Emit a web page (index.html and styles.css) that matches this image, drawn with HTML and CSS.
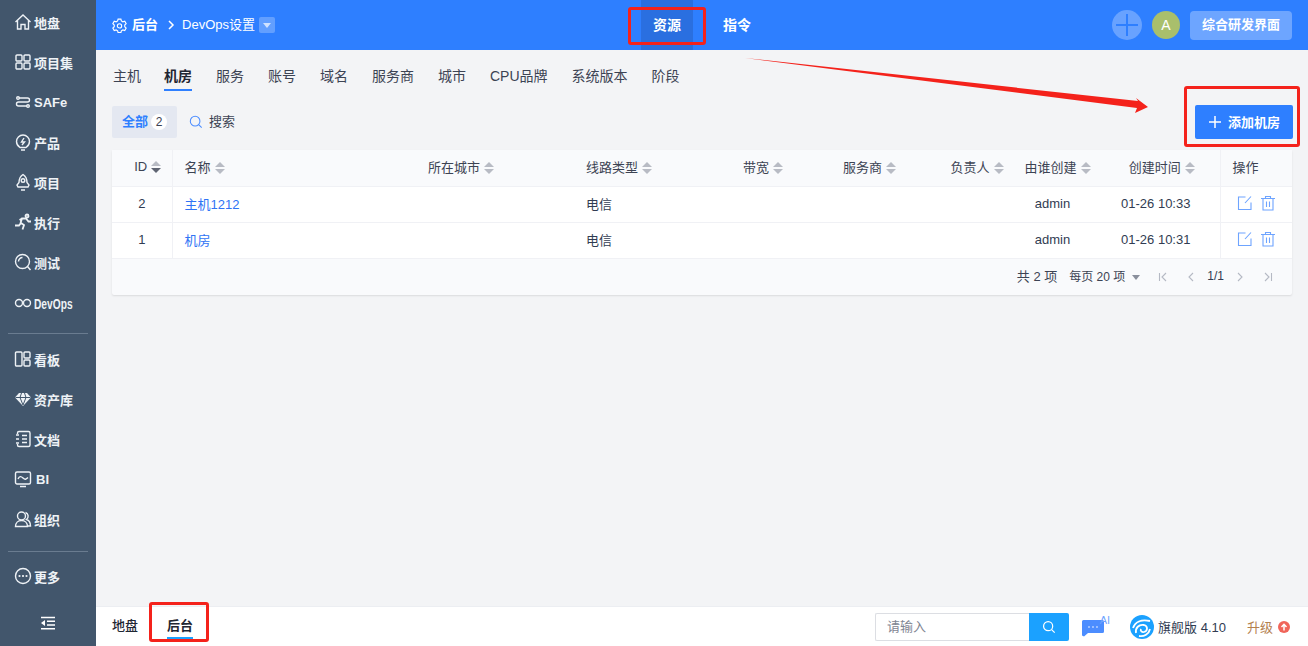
FILE: index.html
```html
<!DOCTYPE html>
<html lang="zh-CN">
<head>
    <meta charset="UTF-8">
    <title>机房 - DevOps设置</title>
    <link rel="stylesheet" href="styles.css">
</head>
<body>
    <div class="app">
        <aside class="sidebar">
            <nav class="menu menu-main">
                <a class="menu-item"><svg viewBox="0 0 18 18"><path d="M1.500 9 9 2l7.500 7M3.500 7.500V16H7v-4.500h4V16h3.500V7.500"/></svg>地盘</a>
                <a class="menu-item"><svg viewBox="0 0 18 18"><rect x="2" y="2" width="6" height="6" rx="1"/><rect x="10" y="2" width="6" height="6" rx="1"/><rect x="2" y="10" width="6" height="6" rx="1"/><rect x="10" y="10" width="6" height="6" rx="1"/></svg>项目集</a>
                <a class="menu-item"><svg viewBox="0 0 18 18"><path d="M5 5h8.500a2 2 0 0 1 0 4h-9a2 2 0 0 0 0 4H13"/><circle cx="4" cy="5" r="1.300"/><circle cx="14" cy="13" r="1.300"/></svg>SAFe</a>
                <a class="menu-item"><svg viewBox="0 0 18 18"><path d="M6 14.500C3.800 13 2.500 11 2.500 8.500a6.500 6.500 0 0 1 13 0c0 2.500-1.300 4.500-3.500 6zM7 17h4M10 5l-2.500 4h3L8 12"/></svg>产品</a>
                <a class="menu-item"><svg viewBox="0 0 18 18"><path d="M9 1.500c3 2 4 5 4 8l2 2.500-1 2H4l-1-2 2-2.500c0-3 1-6 4-8zM7 17h4"/><circle cx="9" cy="7.500" r="1.800"/></svg>项目</a>
                <a class="menu-item"><svg class="icon-run" viewBox="0 0 18 18"><path d="M1 12.500h4l2-2.500 3 2-1.500 4.500M6.500 10l1.500-4.500h4l2.500 3H17M8 5.500 5.500 7"/><circle cx="13" cy="3" r="1.500"/></svg>执行</a>
                <a class="menu-item"><svg viewBox="0 0 18 18"><circle cx="8.500" cy="8.500" r="7"/><path d="M13.500 13.500 16.500 17M4.500 8.500a4 4 0 0 1 4-4"/></svg>测试</a>
                <a class="menu-item menu-devops"><svg viewBox="0 0 18 18"><circle cx="5" cy="9" r="3.500"/><circle cx="13" cy="9" r="3.500"/></svg><span>DevOps</span></a>
            </nav>
            <nav class="menu menu-tools">
                <a class="menu-item"><svg viewBox="0 0 18 18"><rect x="1.500" y="2" width="6.500" height="14" rx="1"/><rect x="10" y="2" width="6" height="6" rx="1"/><rect x="10" y="10" width="6" height="6" rx="1"/></svg>看板</a>
                <a class="menu-item"><svg viewBox="0 0 18 18"><path class="fill" d="M5 3h8l4 4.500L9 16 1 7.500z"/><path class="cut" d="M1.500 7.500h15M6 7.500 9 15l3-7.500M6 7.500 7.500 3M12 7.500 10.500 3"/></svg>资产库</a>
                <a class="menu-item"><svg viewBox="0 0 18 18"><path d="M3.500 4V3a1.500 1.500 0 0 1 1.500-1.500h9.500A1.500 1.500 0 0 1 16 3v12a1.500 1.500 0 0 1-1.500 1.500H5A1.500 1.500 0 0 1 3.500 15v-1M2 5h3M2 9h3M2 13h3M8 5.500h5M8 9h5M8 12.500h5"/></svg>文档</a>
                <a class="menu-item"><svg viewBox="0 0 18 18"><rect x="1.500" y="2" width="15" height="12" rx="1.500"/><path d="M4 9c1.500-3 3-3 5-1s3 1.500 5-.5M6 16.500h6"/></svg><span class="menu-bi">BI</span></a>
                <a class="menu-item"><svg viewBox="0 0 18 18"><circle cx="7.500" cy="6" r="4"/><path d="M1.500 16.500c0-3.500 2.500-6 6-6s6 2.500 6 6zM11.500 2.500a4 4 0 0 1 1 7c2.500.8 4 3 4 6.500h-3"/></svg>组织</a>
            </nav>
            <nav class="menu menu-more">
                <a class="menu-item"><svg viewBox="0 0 18 18"><circle cx="9" cy="9" r="7.500"/><path class="dots" d="M5.500 9h.01M9 9h.01M12.500 9h.01"/></svg>更多</a>
            </nav>
            <button class="collapse-btn"><svg viewBox="0 0 16 14"><path d="M1 1.500h14M7 5.300h8M7 9h8M1 12.800h14"/><path class="fill" d="M5 4v6L1 7z"/></svg></button>
        </aside>

        <div class="main">
            <header class="topbar">
                <div class="crumb">
                    <svg class="crumb-gear" viewBox="0 0 16 16"><path d="M6.500 1.200h3l.5 2 1.600.9 2-.6 1.500 2.600-1.500 1.400v1.800l1.500 1.400-1.500 2.600-2-.6-1.600.9-.5 2h-3l-.5-2-1.600-.9-2 .6L.9 10.700l1.500-1.400V7.500L.9 6.100l1.500-2.600 2 .6L6 3.200z"/><circle cx="8" cy="8.400" r="2.300"/></svg>
                    <span class="crumb-root">后台</span>
                    <svg class="crumb-sep" viewBox="0 0 8 10"><path d="m2 1 4 4-4 4"/></svg>
                    <span class="crumb-page">DevOps设置</span>
                    <span class="crumb-caret"></span>
                </div>
                <nav class="topnav">
                    <a class="topnav-item active">资源</a>
                    <a class="topnav-item">指令</a>
                </nav>
                <div class="top-actions">
                    <span class="top-plus"></span>
                    <span class="avatar">A</span>
                    <button class="switch-btn">综合研发界面</button>
                </div>
            </header>

            <section class="content">
                <nav class="tabs">
                    <a class="tab">主机</a>
                    <a class="tab active">机房</a>
                    <a class="tab">服务</a>
                    <a class="tab">账号</a>
                    <a class="tab">域名</a>
                    <a class="tab">服务商</a>
                    <a class="tab">城市</a>
                    <a class="tab">CPU品牌</a>
                    <a class="tab">系统版本</a>
                    <a class="tab">阶段</a>
                </nav>

                <div class="toolbar">
                    <a class="filter-chip">全部<span class="chip-count">2</span></a>
                    <a class="search-link"><svg viewBox="0 0 16 16"><circle cx="7" cy="7" r="5.500"/><path d="m11 11 3.500 3.500"/></svg>搜索</a>
                    <button class="add-btn"><svg viewBox="0 0 12 12"><path d="M6 0v12M0 6h12"/></svg>添加机房</button>
                </div>

                <div class="table-card">
                    <table class="data-table">
                        <colgroup>
                            <col class="col-id"><col class="col-name"><col class="col-city"><col class="col-line">
                            <col class="col-band"><col class="col-vendor"><col class="col-owner"><col class="col-creator">
                            <col class="col-time"><col class="col-ops">
                        </colgroup>
                        <thead>
                            <tr>
                                <th class="cell-id">ID<span class="sort sort-desc"></span></th>
                                <th>名称<span class="sort"></span></th>
                                <th>所在城市<span class="sort"></span></th>
                                <th>线路类型<span class="sort"></span></th>
                                <th>带宽<span class="sort"></span></th>
                                <th>服务商<span class="sort"></span></th>
                                <th class="cell-owner">负责人<span class="sort"></span></th>
                                <th class="cell-creator">由谁创建<span class="sort"></span></th>
                                <th class="cell-time">创建时间<span class="sort"></span></th>
                                <th class="cell-ops">操作</th>
                            </tr>
                        </thead>
                        <tbody>
                            <tr>
                                <td class="cell-id">2</td>
                                <td><a class="row-link">主机1212</a></td>
                                <td></td>
                                <td>电信</td>
                                <td></td>
                                <td></td>
                                <td></td>
                                <td class="cell-creator">admin</td>
                                <td class="cell-time">01-26 10:33</td>
                                <td class="cell-ops">
                                    <svg class="op-icon" viewBox="0 0 16 16"><path d="M8.500 2H1.500v12.500H14V7.500M14 1.500 8 8"/></svg>
                                    <svg class="op-icon" viewBox="0 0 16 16"><path d="M1 3.500h14M5.500 3.500V1.500h5v2M3 3.500V15h10V3.500M6.500 6.500v5.500M9.500 6.500v5.500"/></svg>
                                </td>
                            </tr>
                            <tr>
                                <td class="cell-id">1</td>
                                <td><a class="row-link">机房</a></td>
                                <td></td>
                                <td>电信</td>
                                <td></td>
                                <td></td>
                                <td></td>
                                <td class="cell-creator">admin</td>
                                <td class="cell-time">01-26 10:31</td>
                                <td class="cell-ops">
                                    <svg class="op-icon" viewBox="0 0 16 16"><path d="M8.500 2H1.500v12.500H14V7.500M14 1.500 8 8"/></svg>
                                    <svg class="op-icon" viewBox="0 0 16 16"><path d="M1 3.500h14M5.500 3.500V1.500h5v2M3 3.500V15h10V3.500M6.500 6.500v5.500M9.500 6.500v5.500"/></svg>
                                </td>
                            </tr>
                        </tbody>
                    </table>
                    <div class="pager">
                        <span class="pager-total">共 2 项</span>
                        <span class="pager-size">每页 20 项<i class="pager-caret"></i></span>
                        <svg class="pager-btn" viewBox="0 0 10 10"><path d="M1.500 1v8M8 1 4 5l4 4"/></svg>
                        <svg class="pager-btn pager-prev" viewBox="0 0 10 10"><path d="M7 1 3 5l4 4"/></svg>
                        <span class="pager-page">1/1</span>
                        <svg class="pager-btn" viewBox="0 0 10 10"><path d="m3 1 4 4-4 4"/></svg>
                        <svg class="pager-btn" viewBox="0 0 10 10"><path d="M8.500 1v8M2 1l4 4-4 4"/></svg>
                    </div>
                </div>
            </section>

            <footer class="bottombar">
                <a class="bottom-tab">地盘</a>
                <a class="bottom-tab active">后台</a>
                <div class="bottom-right">
                    <div class="bottom-search">
                        <input class="bottom-input" placeholder="请输入">
                        <button class="bottom-search-btn"><svg viewBox="0 0 16 16"><circle cx="7" cy="7" r="5.200"/><path d="m11 11 3.500 3.500"/></svg></button>
                    </div>
                    <span class="ai-badge">
                        <svg viewBox="0 0 28 20"><path class="ai-bubble" d="M1.500 3h19a1.500 1.500 0 0 1 1.500 1.500v10a1.500 1.500 0 0 1-1.500 1.500H6l-4 3.500-2-1V4.500A1.500 1.500 0 0 1 1.500 3z"/><path class="ai-dots" d="M7 10h.01M11 10h.01M15 10h.01"/></svg>
                        <b class="ai-label">AI</b>
                    </span>
                    <span class="edition">
                        <svg class="edition-logo" viewBox="0 0 24 24"><circle class="logo-bg" cx="12" cy="12" r="12"/><path class="logo-swirl" d="M3 13C5 7 11 4 20 6M6 18c-1-5 3-9 8-8 4 1 4 6 0 7-2 .5-4-1-3-3M9 21c5 1 10-2 11-7"/></svg>
                        旗舰版 4.10
                    </span>
                    <a class="upgrade">升级<span class="upgrade-dot"><svg viewBox="0 0 12 12"><path d="M6 9.500V3.500M3.500 6 6 3.300 8.500 6"/></svg></span></a>
                </div>
            </footer>
        </div>

        <!-- annotations drawn on the screenshot -->
        <span class="mark mark-nav"></span>
        <span class="mark mark-add"></span>
        <span class="mark mark-tab"></span>
        <svg class="mark-arrow" viewBox="0 0 1308 646"><path d="M745 58 1138 101 1136 98 1148 107 1135 113 1137 108z"/></svg>
    </div>
</body>
</html>
```

FILE: styles.css
```css
* {
    margin: 0;
    padding: 0;
    box-sizing: border-box;
}

body {
    font-family: 'Liberation Sans', 'Noto Sans CJK SC', sans-serif;
    font-size: 13px;
    color: #313c52;
    background: #f3f4f6;
    overflow: hidden;
}

button {
    font-family: inherit;
    border: none;
}

svg {
    display: block;
    fill: none;
    stroke: currentColor;
}

.app {
    position: relative;
    display: flex;
    width: 1308px;
    height: 646px;
}

/* sidebar */
.sidebar {
    display: flex;
    flex-direction: column;
    width: 96px;
    flex-shrink: 0;
    padding: 2px 8px 0;
    background: #42566c;
    color: #eef2f6;
}

.menu {
    display: flex;
    flex-direction: column;
}

.menu-tools {
    margin-top: 9px;
    padding-top: 5px;
    border-top: 1px solid #6a7c90;
}

.menu-more {
    margin-top: 12px;
    padding-top: 4px;
    border-top: 1px solid #6a7c90;
}

.menu-item {
    display: flex;
    align-items: center;
    gap: 2px;
    height: 40px;
    padding-left: 6px;
    font-weight: 700;
    white-space: nowrap;
}

.menu-item svg {
    width: 18px;
    height: 18px;
    flex-shrink: 0;
    stroke-width: 1.400;
}

.menu-item .icon-run {
    stroke-width: 1.800;
}

.menu-item .fill {
    fill: #eef2f6;
    stroke: none;
}

.menu-item .cut {
    stroke: #42566c;
    stroke-width: 1;
}

.menu-item .dots {
    stroke-width: 2.200;
    stroke-linecap: round;
}

.menu-devops {
    height: 42px;
}

.menu-devops span {
    display: inline-block;
    font-size: 15px;
    transform: scaleX(0.68);
    transform-origin: left center;
}

.menu-bi {
    margin-left: 2px;
}

.collapse-btn {
    display: block;
    width: 16px;
    height: 14px;
    margin: 20px 0 0 32px;
    background: none;
    color: #fff;
}

.collapse-btn svg {
    width: 16px;
    height: 14px;
    stroke-width: 1.600;
}

.collapse-btn .fill {
    fill: #fff;
    stroke: none;
}

/* top bar */
.main {
    display: flex;
    flex-direction: column;
    flex: 1;
    min-width: 0;
}

.topbar {
    display: flex;
    align-items: center;
    height: 50px;
    padding-left: 16px;
    background: #2e7fff;
    color: #fff;
    flex-shrink: 0;
}

.crumb {
    display: flex;
    align-items: center;
    width: 529px;
}

.crumb-gear {
    width: 15px;
    height: 15px;
    margin-right: 5px;
    stroke-width: 1.200;
}

.crumb-root {
    font-weight: 700;
    padding-bottom: 3px;
}

.crumb-page {
    padding-bottom: 3px;
}

.crumb-sep {
    width: 8px;
    height: 10px;
    margin: 0 7px 0 9px;
    stroke-width: 1.500;
}

.crumb-caret {
    position: relative;
    width: 16px;
    height: 16px;
    margin-left: 4px;
    border-radius: 2px;
    background: rgba(255, 255, 255, 0.25);
}

.crumb-caret::after {
    content: "";
    position: absolute;
    left: 4px;
    top: 6px;
    border: 4px solid transparent;
    border-top: 5px solid rgba(255, 255, 255, 0.7);
}

.topnav {
    display: flex;
    gap: 18px;
    height: 50px;
}

.topnav-item {
    display: flex;
    align-items: center;
    justify-content: center;
    width: 52px;
    padding-bottom: 3px;
    font-weight: 700;
    font-size: 14px;
}

.topnav-item.active {
    background: #2a6fe0;
}

.top-actions {
    display: flex;
    align-items: center;
    margin-left: auto;
    padding-right: 16px;
}

.top-plus {
    position: relative;
    width: 30px;
    height: 30px;
    border-radius: 50%;
    background: rgba(255, 255, 255, 0.28);
}

.top-plus::before,
.top-plus::after {
    content: "";
    position: absolute;
    background: #2e7fff;
}

.top-plus::before {
    left: 4px;
    right: 4px;
    top: 14px;
    height: 2px;
}

.top-plus::after {
    top: 4px;
    bottom: 4px;
    left: 14px;
    width: 2px;
}

.avatar {
    width: 28px;
    height: 28px;
    margin-left: 10px;
    border-radius: 50%;
    background: #a9bf6c;
    font-size: 14px;
    line-height: 28px;
    text-align: center;
}

.switch-btn {
    width: 102px;
    height: 29px;
    margin-left: 10px;
    padding-bottom: 3px;
    border-radius: 4px;
    background: rgba(255, 255, 255, 0.3);
    color: #fff;
    font-size: 13px;
    font-weight: 700;
}

/* content */
.content {
    flex: 1;
    padding: 0 16px;
}

.tabs {
    display: flex;
    gap: 24px;
    height: 41px;
    margin-bottom: 14px;
}

.tab {
    display: flex;
    align-items: center;
    height: 41px;
    padding-top: 10px;
    font-size: 14px;
    color: #3c4353;
    border-bottom: 2px solid transparent;
}

.tab.active {
    font-weight: 700;
    color: #1f2633;
    border-bottom-color: #2e7fff;
}

.tabs .tab:first-child {
    margin-left: 1px;
    margin-right: -1px;
}

.toolbar {
    display: flex;
    align-items: center;
    height: 34px;
    margin-bottom: 11px;
}

.filter-chip {
    display: flex;
    align-items: center;
    height: 32px;
    padding: 0 10px 3px;
    border-radius: 2px;
    background: #e4e8f1;
    color: #2e7fff;
    font-weight: 700;
}

.chip-count {
    width: 16px;
    height: 16px;
    margin: 3px 0 0 3px;
    border-radius: 50%;
    background: #fff;
    color: #3c4353;
    font-size: 12px;
    font-weight: 400;
    line-height: 16px;
    text-align: center;
}

.search-link {
    display: flex;
    align-items: center;
    gap: 6px;
    margin-left: 12px;
    padding-bottom: 3px;
    color: #3c4353;
}

.search-link svg {
    width: 14px;
    height: 14px;
    margin-top: 3px;
    color: #4c8dff;
    stroke-width: 1.200;
}

.add-btn {
    display: flex;
    align-items: center;
    gap: 7px;
    height: 34px;
    margin: 0 -1px 0 auto;
    padding: 0 13px 2px 14px;
    border-radius: 2px;
    background: #2e7fff;
    color: #fff;
    font-size: 13px;
    font-weight: 700;
}

.add-btn svg {
    width: 12px;
    height: 12px;
    margin-top: 2px;
    stroke-width: 1.500;
}

/* table */
.table-card {
    background: #f9fafc;
    border-radius: 2px;
    box-shadow: 0 1px 2px rgba(0, 0, 0, 0.1);
}

.data-table {
    width: 100%;
    table-layout: fixed;
    border-collapse: collapse;
}

.col-id { width: 60px; }
.col-name { width: 244px; }
.col-city { width: 158px; }
.col-line { width: 157px; }
.col-band { width: 100px; }
.col-vendor { width: 106px; }
.col-owner { width: 76px; }
.col-creator { width: 105px; }
.col-time { width: 102px; }
.col-ops { width: 72px; }

.data-table th,
.data-table td {
    height: 36px;
    padding: 0 12px 2px;
    text-align: left;
    font-weight: 400;
    white-space: nowrap;
    border-bottom: 1px solid #f0f1f5;
}

.data-table th {
    background: #f9fafc;
    color: #3c4353;
}

.data-table td {
    background: #fff;
}

.data-table .cell-id {
    padding: 0 0 2px;
    text-align: center;
    border-right: 1px solid #f0f1f5;
}

.data-table th.cell-id {
    padding-left: 12px;
}

.data-table .cell-ops {
    border-left: 1px solid #f0f1f5;
}

.data-table td.cell-ops {
    padding-left: 16px;
    padding-right: 0;
}

.data-table .cell-owner {
    padding: 0 0 2px 4px;
    text-align: center;
}

.data-table .cell-creator,
.data-table .cell-time {
    padding: 0 26px 2px 0;
    text-align: center;
}

.data-table th.cell-creator {
    padding-right: 16px;
}

.data-table th.cell-time {
    padding-right: 14px;
}

.sort {
    position: relative;
    display: inline-block;
    width: 10px;
    height: 12px;
    margin-left: 4px;
    vertical-align: -2px;
}

.sort::before,
.sort::after {
    content: "";
    position: absolute;
    left: 0;
    border: 5px solid transparent;
}

.sort::before {
    top: -5px;
    border-bottom-color: #b8bbc4;
}

.sort::after {
    top: 7px;
    border-top-color: #b8bbc4;
}

.sort-desc::after {
    border-top-color: #5f6472;
}

.row-link {
    color: #2f74f5;
}

.data-table .cell-ops svg {
    display: inline-block;
    vertical-align: middle;
}

.op-icon {
    width: 16px;
    height: 16px;
    margin-right: 4px;
    color: #6ea4ff;
    stroke-width: 1.100;
}

.pager {
    display: flex;
    align-items: center;
    justify-content: flex-end;
    height: 36px;
    padding-right: 19px;
    font-size: 12px;
    color: #3c4353;
}

.pager-total {
    margin-right: 12px;
    padding-bottom: 2px;
    font-size: 13px;
}

.pager-size {
    display: flex;
    align-items: center;
    margin-right: 18px;
    padding-bottom: 2px;
}

.pager-caret {
    margin: 3px 0 0 7px;
    border: 4.500px solid transparent;
    border-top: 5px solid #8a8f9c;
    border-bottom: 0;
}

.pager-btn {
    width: 10px;
    height: 10px;
    margin-right: 18px;
    color: #b5b9c4;
    stroke-width: 1.100;
}

.pager-btn.pager-prev {
    margin-right: 12px;
}

.pager-btn:last-child {
    margin-right: 0;
}

.pager-page {
    margin: 0 11px 0 -1px;
    padding-bottom: 1px;
    font-size: 12px;
    color: #313c52;
}

/* bottom bar */
.bottombar {
    display: flex;
    align-items: center;
    height: 40px;
    padding-left: 16px;
    background: #fff;
    border-top: 1px solid #eceef2;
    flex-shrink: 0;
}

.bottom-tab {
    display: flex;
    align-items: center;
    height: 24px;
    margin-right: 29px;
    padding-bottom: 2px;
    color: #1f2633;
    font-weight: 500;
    border-bottom: 2px solid transparent;
}

.bottom-tab.active {
    font-weight: 700;
    border-bottom-color: #1ba1ff;
}

.bottom-right {
    display: flex;
    align-items: center;
    margin-left: auto;
    padding-right: 18px;
}

.bottom-search {
    display: flex;
    width: 194px;
    height: 28px;
}

.bottom-input {
    width: 154px;
    padding: 0 11px;
    border: 1px solid #dcdee3;
    border-right: none;
    border-radius: 2px 0 0 2px;
    outline: none;
    font-family: inherit;
    font-size: 13px;
}

.bottom-input::placeholder {
    color: #7f8592;
}

.bottom-search-btn {
    width: 40px;
    height: 28px;
    border-radius: 0 2px 2px 0;
    background: #1ba1ff;
    color: #fff;
}

.bottom-search-btn svg {
    width: 14px;
    height: 14px;
    margin: 0 auto;
    stroke-width: 1.400;
}

.ai-badge {
    position: relative;
    width: 28px;
    height: 20px;
    margin-left: 13px;
}

.ai-badge svg {
    width: 28px;
    height: 20px;
}

.ai-bubble {
    fill: #4c8dff;
    stroke: none;
}

.ai-dots {
    stroke: #fff;
    stroke-width: 1.600;
    stroke-linecap: round;
}

.ai-label {
    position: absolute;
    right: 0;
    top: -3px;
    color: #6ea4ff;
    font-size: 11px;
    font-weight: 400;
}

.edition {
    display: flex;
    align-items: center;
    gap: 4px;
    margin-left: 20px;
    font-size: 13px;
}

.edition-logo {
    width: 24px;
    height: 24px;
}

.logo-bg {
    fill: #1ba1ff;
    stroke: none;
}

.logo-swirl {
    stroke: #fff;
    stroke-width: 1.800;
}

.upgrade {
    display: flex;
    align-items: center;
    gap: 5px;
    margin-left: 21px;
    color: #b4814f;
    font-size: 13px;
}

.upgrade-dot {
    width: 12px;
    height: 12px;
    border-radius: 50%;
    background: #f0655a;
    color: #fff;
}

.upgrade-dot svg {
    width: 12px;
    height: 12px;
    stroke-width: 1.500;
}

/* red annotations over the page */
.mark {
    position: absolute;
    border: 3px solid #f4221b;
    border-radius: 3px;
}

.mark-nav {
    left: 628px;
    top: 7px;
    width: 78px;
    height: 38px;
}

.mark-add {
    left: 1184px;
    top: 86px;
    width: 116px;
    height: 61px;
}

.mark-tab {
    left: 149px;
    top: 602px;
    width: 60px;
    height: 40px;
}

.mark-arrow {
    position: absolute;
    left: 0;
    top: 0;
    width: 1308px;
    height: 646px;
    pointer-events: none;
    stroke: none;
    fill: #f4221b;
}
```
